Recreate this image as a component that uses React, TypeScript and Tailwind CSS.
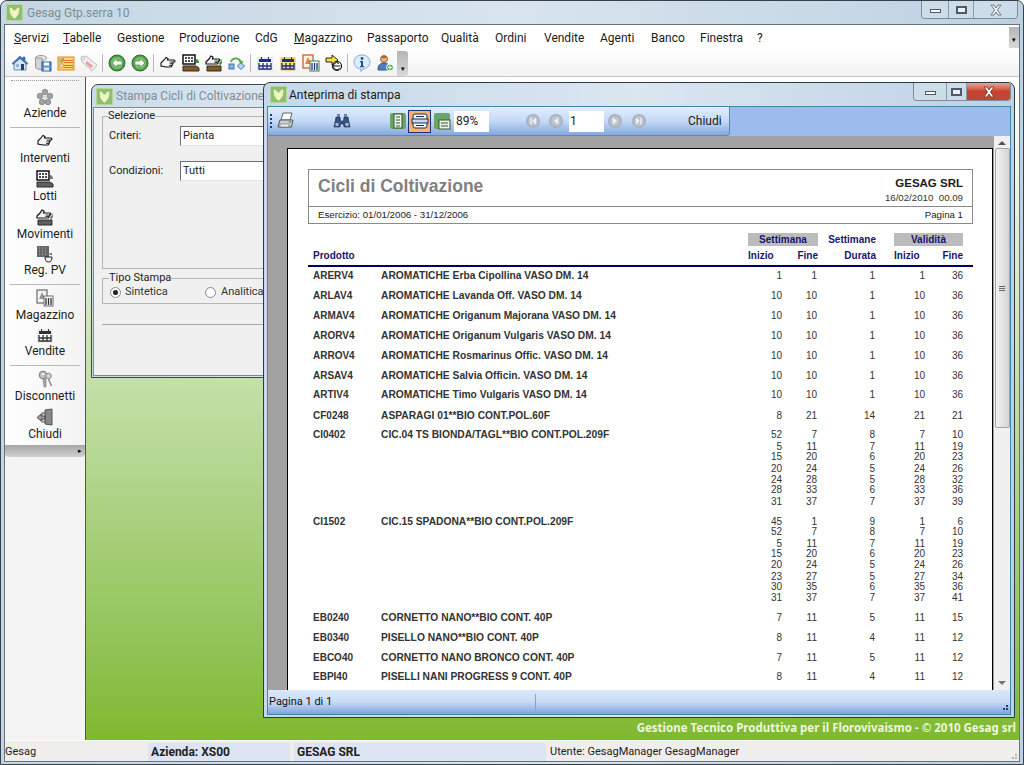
import type { ReactNode } from "react"

const ui = "font-['Roboto','Noto_Sans',sans-serif]"
const report = "font-['Liberation_Sans',Arial,sans-serif]"

function Svg({ children, size = 18, className = "" }: { children: ReactNode; size?: number; className?: string }) {
  return (
    <svg width={size} height={size} viewBox="0 0 18 18" className={"shrink-0 " + className}>
      {children}
    </svg>
  )
}

const AppLogo = () => (
  <Svg size={17}>
    <rect x="0.5" y="0.5" width="17" height="17" fill="#8fbf6e" stroke="#b9d5a0" />
    <path d="M9 15V7M9 15C6 13 4 10 4.500 4 7 5 8.500 7 9 9M9 15c3-2 5-5 4.500-11C11 5 9.500 7 9 9" fill="#f2f2b8" stroke="#f7f7d8" strokeWidth="0.8" />
  </Svg>
)

const Home = () => (
  <Svg>
    <path d="M3 9v7h12V9L9 4z" fill="#d9e6f2" stroke="#6b8bad" />
    <path d="M1 9.500 9 2l3 2.800V3h2v3.700l3 2.800-1 1L9 4.500 2 10.500z" fill="#3f79bd" stroke="#234f86" strokeWidth="0.5" />
    <rect x="10" y="10" width="3" height="6" fill="#1f3f73" />
    <rect x="5" y="10" width="3" height="3" fill="#8fb4dc" />
  </Svg>
)
const DbSave = () => (
  <Svg>
    <ellipse cx="7" cy="4" rx="5.500" ry="2.500" fill="#e6e6e6" stroke="#999" />
    <path d="M1.500 4v9c0 1.500 2.500 2.500 5.500 2.500h1V4z" fill="#d4d4d4" stroke="#999" />
    <rect x="8" y="8" width="9" height="9" fill="#5b93cf" stroke="#2f5f98" />
    <rect x="10" y="8.500" width="5" height="3" fill="#fff" />
    <rect x="10" y="13.500" width="5" height="3" fill="#dbe8f5" />
  </Svg>
)
const CheckList = () => (
  <Svg>
    <rect x="1" y="3" width="16" height="13" fill="#fbd66b" stroke="#d8892a" />
    <rect x="3" y="5" width="3" height="3" fill="#fff" stroke="#a06a20" strokeWidth="0.6" />
    <rect x="3" y="10" width="3" height="3" fill="#fff" stroke="#a06a20" strokeWidth="0.6" />
    <path d="M7 6.500h9M7 11.500h9M7 8.500h9M7 13.500h9" stroke="#d8772a" />
    <path d="M3.500 6.500l1 1 2-3" stroke="#2f7d2a" fill="none" />
  </Svg>
)
const Tag = () => (
  <Svg>
    <path d="M1 3l5-1 11 9-5 6L2 8z" fill="#f1eeee" stroke="#bcbcbc" />
    <path d="M7 7l6 5-2 2.500-5.500-5z" fill="#ee9d9d" />
    <circle cx="4" cy="5" r="1" fill="#fff" stroke="#aaa" strokeWidth="0.5" />
  </Svg>
)
const RoundArrow = ({ dir }: { dir: "l" | "r" }) => (
  <Svg>
    <circle cx="9" cy="9" r="8" fill="#4d9a48" stroke="#2c6d2c" />
    <circle cx="9" cy="9" r="6" fill="#7cc06d" />
    <path d={dir === "l" ? "M4 9l5-4.500V7h5v4H9v2.500z" : "M14 9L9 4.500V7H4v4h5v2.500z"} fill="#f3f7ee" stroke="#2c6d2c" strokeWidth="0.5" />
  </Svg>
)
const Hand = () => (
  <Svg>
    <path d="M2 9l3-3 2-2.500 2 1L8.500 6H15c1.300 0 1.300 2 0 2h-1.500c1 .3.800 1.800-.2 1.800.6.500.3 1.700-.6 1.700.3.600-.1 1.500-1 1.500H7l-5-1z" fill="#f7f7f7" stroke="#111" strokeWidth="1.100" />
    <path d="M10.500 8h3M10.500 9.800h2.800M10 11.500h2.500" stroke="#111" strokeWidth="0.8" />
  </Svg>
)
const KeyboardBox = () => (
  <Svg>
    <path d="M1 12h13l3 2v3H1z" fill="#7d5a32" stroke="#3f2a12" />
    <rect x="1" y="1" width="12" height="9" fill="#fff" stroke="#111" strokeWidth="1.500" />
    <path d="M3 4h2M6 4h2M9 4h2M3 7h2M6 7h2M9 7h2" stroke="#111" strokeWidth="1.300" />
    <path d="M14 5c2 0 3 2 3 4h-3z" fill="#3f8f3a" />
  </Svg>
)
const HandBox = () => (
  <Svg>
    <path d="M2 12h14v5H2z" fill="#7d5a32" stroke="#3f2a12" />
    <path d="M1 8l3-3 2-3 2 1-.5 2H14c1.200 0 1.200 1.800 0 1.800h-1c.8.300.6 1.500-.2 1.500.5.500.2 1.700-.8 1.700H5L1 10z" fill="#f3f3f3" stroke="#111" strokeWidth="1.200" />
    <path d="M9.500 7h3M9.500 8.500h2.500" stroke="#111" strokeWidth="0.8" />
    <path d="M14 9c2-1 2.500-3 2.500-5l.5 5-2 3z" fill="#3f8f3a" />
  </Svg>
)
const SyncArrow = () => (
  <Svg>
    <rect x="1" y="10" width="5" height="5" fill="#7fb0e6" stroke="#3d74b5" />
    <path d="M13 8.500l3.500 3.500-3.500 3.500L9.500 12z" fill="#b9d6f3" stroke="#3d74b5" />
    <path d="M3 8c1-4 7-5.500 10 0" fill="none" stroke="#5aa64e" strokeWidth="1.800" />
    <path d="M10.500 7.500l5-.5-2 3.500z" fill="#5aa64e" />
  </Svg>
)
const Calendar = ({ bg = "#fff" }: { bg?: string }) => (
  <Svg>
    <rect x="2" y="4" width="14" height="12" fill={bg} stroke={bg === "#fff" ? "#cfd8ea" : "#d9b93c"} />
    <rect x="3" y="5" width="12" height="3" fill="#1f2f7a" />
    <path d="M3 9v6h12V9M7 9v6M11 9v6M3 12h12" fill="none" stroke="#1f2f7a" strokeWidth="1.300" />
    <path d="M5.500 3v3M12.500 3v3" stroke="#1f2f7a" />
  </Svg>
)
const DocChart = () => (
  <Svg>
    <rect x="1" y="1" width="10" height="13" fill="#fff3e6" stroke="#d0602a" strokeWidth="1.300" />
    <path d="M6 3l3 7H3z" fill="#e6833a" />
    <rect x="8" y="7" width="9" height="10" fill="#fff" stroke="#3c7a52" />
    <path d="M10 9v7M12.500 9v7M15 9v7" stroke="#1f2f7a" strokeWidth="1.300" />
  </Svg>
)
const ArrowE = () => (
  <Svg>
    <path d="M1 4h6V1l6 5-6 5V8H1z" fill="#ffe23c" stroke="#111" strokeWidth="0.9" />
    <circle cx="12" cy="12" r="4.500" fill="#fff" stroke="#111" strokeWidth="1.200" />
    <path d="M9 12h6M14 9.500a3.500 3.500 0 1 0 .5 5" fill="none" stroke="#111" />
  </Svg>
)
const InfoBubble = () => (
  <Svg>
    <path d="M9 1c4.500 0 8 3 8 7s-3.500 7-7 7l-2 2.500V15C4 14.500 1 12 1 8s3.500-7 8-7z" fill="#dcecfb" stroke="#7fa9d6" />
    <circle cx="9" cy="4.500" r="1.400" fill="#1f4f9a" />
    <path d="M7 7h3v5h1.200v1.200H7V12h1V8.200H7z" fill="#1f4f9a" />
  </Svg>
)
const UserAdd = () => (
  <Svg>
    <circle cx="8" cy="5" r="3.500" fill="#e8b27c" stroke="#9a6a35" />
    <path d="M5 3.500c1-2.500 5-2.500 6 0-2 1-4 1-6 0z" fill="#a5642a" />
    <path d="M2 16c0-5 2-7 6-7s6 2 6 7z" fill="#4f7fbe" stroke="#2f5590" />
    <circle cx="14" cy="13.500" r="3.500" fill="#5bb04e" stroke="#fff" />
    <path d="M14 11.500v4M12 13.500h4" stroke="#fff" strokeWidth="1.200" />
  </Svg>
)
const Flower = () => (
  <Svg>
    <g fill="#a2a2a2" stroke="#6d6d6d" strokeWidth="0.6">
      <circle cx="9" cy="4" r="2.800" />
      <circle cx="4" cy="8" r="2.800" />
      <circle cx="14" cy="8" r="2.800" />
      <circle cx="6" cy="14" r="2.800" />
      <circle cx="12" cy="14" r="2.800" />
    </g>
    <circle cx="9" cy="9.500" r="2" fill="#d9d9d9" />
  </Svg>
)
const DottedCup = () => (
  <Svg>
    <rect x="1" y="1" width="12" height="11" fill="#666" />
    <path d="M3 3h.8M6 3h.8M9 3h.8M3 6h.8M6 6h.8M9 6h.8M3 9h.8M6 9h.8M9 9h.8" stroke="#ccc" />
    <path d="M9 12h7c0 3-1 5-3.500 5S9 15 9 12z" fill="#f2f2f2" stroke="#222" />
    <path d="M12 9l4-1v2z" fill="#555" />
  </Svg>
)
const Keys = () => (
  <Svg>
    <circle cx="7" cy="5" r="3.800" fill="#c2c2c2" stroke="#777" />
    <circle cx="7" cy="4" r="1" fill="#fff" />
    <path d="M7 9l1 8h2V9z" fill="#aaa" stroke="#777" strokeWidth="0.6" />
    <circle cx="12.500" cy="6" r="2.800" fill="#d2d2d2" stroke="#888" />
    <path d="M12.500 9l3 7" stroke="#888" strokeWidth="1.500" />
  </Svg>
)
const Door = () => (
  <Svg>
    <path d="M9 2l7-1v16l-7-1z" fill="#888" stroke="#555" />
    <rect x="6" y="5" width="3" height="9" fill="#ddd" stroke="#555" />
    <path d="M1 9.500L5 6v2h4v3H5v2z" fill="#9a9a9a" stroke="#333" strokeWidth="0.7" />
  </Svg>
)
const Printer = () => (
  <Svg>
    <path d="M6 1h9l-2 7H4z" fill="#fff" stroke="#666" />
    <path d="M3 8h13l-1.500 7H1z" fill="#c9d0d8" stroke="#555" />
    <rect x="3" y="12" width="9" height="3" fill="#eee" stroke="#666" strokeWidth="0.6" />
    <circle cx="13" cy="10" r="1" fill="#3aa33a" />
  </Svg>
)
const Binoculars = () => (
  <Svg>
    <path d="M3 5h4l.5 4h3L11 5h4l2 10h-6l-.5-3h-3L7 15H1z" fill="#36507f" stroke="#1b2c4e" strokeWidth="0.6" />
    <rect x="4" y="2" width="3" height="3" fill="#6c84ad" />
    <rect x="11" y="2" width="3" height="3" fill="#6c84ad" />
    <rect x="2.500" y="11" width="3" height="3" fill="#a9bbd8" />
    <rect x="12.500" y="11" width="3" height="3" fill="#a9bbd8" />
  </Svg>
)
const PageBtn = ({ kind }: { kind: 1 | 2 | 3 }) => (
  <Svg>
    {kind === 2 ? (
      <>
        <rect x="2" y="2" width="14" height="14" rx="2" fill="#f2f6fb" stroke="#1f2f55" />
        <rect x="1" y="7" width="16" height="4" fill="#c8d8ee" stroke="#1f2f55" />
        <path d="M5 4.500h8M5 13.500h8" stroke="#1f2f55" />
      </>
    ) : kind === 1 ? (
      <>
        <rect x="1" y="1" width="16" height="16" rx="2" fill="#67a664" />
        <rect x="5" y="2" width="8" height="14" fill="#eef3ea" stroke="#35562f" />
        <path d="M7 5h4M7 8h4M7 11h4M7 14h4" stroke="#35562f" />
      </>
    ) : (
      <>
        <rect x="1" y="1" width="16" height="16" rx="2" fill="#67a664" />
        <rect x="6" y="8" width="11" height="9" fill="#eef3ea" stroke="#35562f" />
        <path d="M8 11h7M8 14h7" stroke="#35562f" />
      </>
    )}
  </Svg>
)
const NavBtn = ({ glyph }: { glyph: "first" | "prev" | "next" | "last" }) => (
  <Svg size={16}>
    <circle cx="9" cy="9" r="8" fill="#a9b4c2" />
    <circle cx="9" cy="9" r="5.500" fill="#bcc5d0" />
    {glyph === "first" && <path d="M6 5h1.500v8H6zM12.500 5v8L8 9z" fill="#eef1f5" />}
    {glyph === "prev" && <path d="M11.500 5v8L6.500 9z" fill="#eef1f5" />}
    {glyph === "next" && <path d="M6.500 5v8l5-4z" fill="#eef1f5" />}
    {glyph === "last" && <path d="M10.500 5H12v8h-1.500zM5.500 5v8L10 9z" fill="#eef1f5" />}
  </Svg>
)

const menu = [
  { label: "Servizi", w: "w-[49px]", u: true },
  { label: "Tabelle", w: "w-[54px]", u: true },
  { label: "Gestione", w: "w-[62px]" },
  { label: "Produzione", w: "w-[76px]" },
  { label: "CdG", w: "w-[39px]" },
  { label: "Magazzino", w: "w-[73px]", u: true },
  { label: "Passaporto", w: "w-[74px]" },
  { label: "Qualità", w: "w-[54px]" },
  { label: "Ordini", w: "w-[49px]" },
  { label: "Vendite", w: "w-[56px]" },
  { label: "Agenti", w: "w-[51px]" },
  { label: "Banco", w: "w-[49px]" },
  { label: "Finestra", w: "w-[57px]" },
  { label: "?", w: "w-[12px]" },
]

const ToolSep = () => <div className="mx-[2px] h-[18px] w-px bg-[#b9b9b9]" />
const Slot = ({ children }: { children: ReactNode }) => <div className="flex w-[23px] justify-center">{children}</div>

function WinButtons({ active }: { active?: boolean }) {
  return (
    <div className="flex h-[18px] overflow-hidden rounded-b-[4px] border border-t-0 border-[#7f8c98]">
      <div className={"flex items-center justify-center bg-[#d2dfeb]/70 " + (active ? "w-[32px]" : "w-[26px]")}>
        <div className="mt-[3px] h-[4px] w-[11px] border border-[#4e5a66] bg-white" />
      </div>
      <div className={"flex items-center justify-center border-x border-[#8d9aa6] bg-[#d2dfeb]/70 " + (active ? "w-[21px]" : "w-[26px]")}>
        <div className="h-[8px] w-[11px] border-2 border-[#4e5a66] bg-white/60" />
      </div>
      <div className={"flex w-[43px] items-center justify-center " + (active ? "bg-gradient-to-b from-[#e3a496] via-[#c9412c] to-[#b84a35]" : "bg-[#d2dfeb]/70")}>
        <svg width="14" height="12" viewBox="0 0 14 12">
          <path d="M2 1h3l2 3 2-3h3L8.500 6 12 11H9L7 8l-2 3H2l3.500-5z" fill={active ? "#fff" : "#e8eef4"} stroke={active ? "#6d2a1c" : "#5a6672"} strokeWidth="0.8" />
        </svg>
      </div>
    </div>
  )
}

function Side({ icon, label, gray = false, h = "h-[38px]" }: { icon: ReactNode; label: string; gray?: boolean; h?: string }) {
  return (
    <div className={"flex flex-col items-center justify-start " + h}>
      <div className={"flex h-[20px] items-center " + (gray ? "grayscale" : "")}>{icon}</div>
      <div className="mt-[-2px] text-[12px] leading-[18px] text-[#1c1c1c]">{label}</div>
    </div>
  )
}
const SideSep = () => <div className="mx-[4px] mb-[3px] mt-[5px] h-px bg-[#b8b8b8]" />

const lines: { code?: string; desc?: string; n: number[]; h: string }[] = [
  { code: "ARERV4", desc: "AROMATICHE Erba Cipollina VASO DM. 14", n: [1, 1, 1, 1, 36], h: "h-[20px]" },
  { code: "ARLAV4", desc: "AROMATICHE Lavanda Off. VASO DM. 14", n: [10, 10, 1, 10, 36], h: "h-[20px]" },
  { code: "ARMAV4", desc: "AROMATICHE Origanum Majorana VASO DM. 14", n: [10, 10, 1, 10, 36], h: "h-[20px]" },
  { code: "ARORV4", desc: "AROMATICHE Origanum Vulgaris VASO DM. 14", n: [10, 10, 1, 10, 36], h: "h-[20px]" },
  { code: "ARROV4", desc: "AROMATICHE Rosmarinus Offic. VASO DM. 14", n: [10, 10, 1, 10, 36], h: "h-[20px]" },
  { code: "ARSAV4", desc: "AROMATICHE Salvia Officin. VASO DM. 14", n: [10, 10, 1, 10, 36], h: "h-[19px]" },
  { code: "ARTIV4", desc: "AROMATICHE Timo Vulgaris VASO DM. 14", n: [10, 10, 1, 10, 36], h: "h-[21px]" },
  { code: "CF0248", desc: "ASPARAGI 01**BIO CONT.POL.60F", n: [8, 21, 14, 21, 21], h: "h-[19px]" },
  { code: "CI0402", desc: "CIC.04 TS BIONDA/TAGL**BIO CONT.POL.209F", n: [52, 7, 8, 7, 10], h: "h-[12px]" },
  { n: [5, 11, 7, 11, 19], h: "h-[10px]" },
  { n: [15, 20, 6, 20, 23], h: "h-[12px]" },
  { n: [20, 24, 5, 24, 26], h: "h-[11px]" },
  { n: [24, 28, 5, 28, 32], h: "h-[10px]" },
  { n: [28, 33, 6, 33, 36], h: "h-[12px]" },
  { n: [31, 37, 7, 37, 39], h: "h-[20px]" },
  { code: "CI1502", desc: "CIC.15 SPADONA**BIO CONT.POL.209F", n: [45, 1, 9, 1, 6], h: "h-[10px]" },
  { n: [52, 7, 8, 7, 10], h: "h-[12px]" },
  { n: [5, 11, 7, 11, 19], h: "h-[10px]" },
  { n: [15, 20, 6, 20, 23], h: "h-[11px]" },
  { n: [20, 24, 5, 24, 26], h: "h-[12px]" },
  { n: [23, 27, 5, 27, 34], h: "h-[10px]" },
  { n: [30, 35, 6, 35, 36], h: "h-[11px]" },
  { n: [31, 37, 7, 37, 41], h: "h-[20px]" },
  { code: "EB0240", desc: "CORNETTO NANO**BIO CONT. 40P", n: [7, 11, 5, 11, 15], h: "h-[20px]" },
  { code: "EB0340", desc: "PISELLO NANO**BIO CONT. 40P", n: [8, 11, 4, 11, 12], h: "h-[20px]" },
  { code: "EBCO40", desc: "CORNETTO NANO BRONCO CONT. 40P", n: [7, 11, 5, 11, 12], h: "h-[19px]" },
  { code: "EBPI40", desc: "PISELLI NANI PROGRESS 9 CONT. 40P", n: [8, 11, 4, 11, 12], h: "h-[16px]" },
]

function ReportPage() {
  return (
    <div className={"h-full border-x border-t border-black bg-white pl-[20px] pt-[20px] " + report}>
      <div className="w-[665px] border border-[#8a8a8a]">
        <div className="flex h-[37px] justify-between border-b border-[#8a8a8a] pl-[9px] pr-[9px]">
          <div className="pt-[6px] text-[17.500px] font-bold leading-[20px] text-[#808080]">Cicli di Coltivazione</div>
          <div className="text-right">
            <div className="pt-[6px] text-[11.500px] font-bold leading-[14px] text-[#1a1a1a]">GESAG SRL</div>
            <div className="mt-[2px] whitespace-pre text-[9.700px] leading-[12px] text-[#333]">16/02/2010  00.09</div>
          </div>
        </div>
        <div className="flex h-[16px] items-center justify-between px-[9px] text-[9.700px] text-[#222]">
          <span>Esercizio: 01/01/2006 - 31/12/2006</span>
          <span>Pagina 1</span>
        </div>
      </div>

      <div className="mt-[9px] grid h-[11px] grid-cols-[440px_70px_10px_48px_18px_69px] text-[10px] font-bold leading-[13px] text-[#1a1570]">
        <div />
        <div className="bg-[#bcbcbc] text-center">Settimana</div>
        <div />
        <div className="text-right">Settimane</div>
        <div />
        <div className="bg-[#bcbcbc] text-center">Validità</div>
      </div>
      <div className="mt-[6px] grid h-[12px] grid-cols-[440px_70px_10px_48px_18px_69px] text-[10px] font-bold leading-[12px] text-[#1a1570]">
        <div className="pl-[5px]">Prodotto</div>
        <div className="flex justify-between">
          <span>Inizio</span>
          <span>Fine</span>
        </div>
        <div />
        <div className="text-right">Durata</div>
        <div />
        <div className="flex justify-between">
          <span>Inizio</span>
          <span>Fine</span>
        </div>
      </div>
      <div className="mt-[3px] h-[2px] w-[665px] bg-[#00005a]" />

      <div className="mt-[3px] pl-[5px]">
        {lines.map((l, i) => (
          <div key={i} className={"grid grid-cols-[68px_366px_35px_35px_58px_50px_38px] " + l.h}>
            <div className="text-[10px] font-bold leading-[12px] text-[#333]">{l.code}</div>
            <div className="whitespace-nowrap text-[10.250px] font-bold leading-[12px] text-[#333]">{l.desc}</div>
            {l.n.map((v, j) => (
              <div key={j} className="text-right text-[10px] leading-[12px] text-[#333]">
                {v}
              </div>
            ))}
          </div>
        ))}
      </div>
    </div>
  )
}

function PreviewWindow() {
  return (
    <div className="absolute left-[177px] top-[5px] flex h-[636px] w-[752px] flex-col overflow-hidden rounded-t-[7px] border border-[#2c3a44] bg-gradient-to-r from-[#c6d8ea] via-[#dbe6f0] to-[#bcd1e6]">
      <div className="flex h-[23px] shrink-0 items-center pl-[6px] pr-[3px]">
        <AppLogo />
        <span className="ml-[2px] text-[12px] text-[#1a1a1a]">Anteprima di stampa</span>
        <div className="ml-auto self-start">
          <WinButtons active />
        </div>
      </div>

      <div className="mx-[3px] flex min-h-0 flex-1 flex-col border border-[#3f88a8]">
        <div className="flex h-[29px] shrink-0 bg-[#9ebbee]">
          <div className="flex w-[462px] items-center rounded-br-[4px] border-b border-r border-[#5f86c4] bg-gradient-to-b from-[#e2edfc] via-[#c5d9f7] to-[#84a8dd] pl-[2px]">
            <div className="mr-[5px] h-[14px] w-[2px] border-l-2 border-dotted border-[#1f3f78]" />
            <Printer />
            <div className="ml-[38px]">
              <Binoculars />
            </div>
            <div className="ml-[38px] w-[18px]">
              <PageBtn kind={1} />
            </div>
            <div className="ml-[1px] flex h-[23px] w-[23px] items-center justify-center border border-[#1f2f75] bg-[#f6b36b]">
              <PageBtn kind={2} />
            </div>
            <div className="ml-[2px]">
              <PageBtn kind={3} />
            </div>
            <div className="ml-[3px] h-[21px] w-[35px] bg-white pl-[2px] text-[12px] leading-[21px] text-[#222]">89%</div>
            <div className="ml-[36px]">
              <NavBtn glyph="first" />
            </div>
            <div className="ml-[7px]">
              <NavBtn glyph="prev" />
            </div>
            <div className="ml-[5px] h-[21px] w-[35px] bg-white pl-[1px] text-[12px] leading-[21px] text-[#222]">1</div>
            <div className="ml-[3px]">
              <NavBtn glyph="next" />
            </div>
            <div className="ml-[8px]">
              <NavBtn glyph="last" />
            </div>
            <span className="ml-[41px] text-[12px] text-[#1a1a1a]">Chiudi</span>
          </div>
        </div>

        <div className="flex min-h-0 flex-1 bg-[#f0f0f0]">
          <div className="min-h-0 min-w-0 flex-1 overflow-hidden bg-[#a3a3a3] pl-[19px] pr-[1px] pt-[12px]">
            <ReportPage />
          </div>
          <div className="flex w-[16px] shrink-0 flex-col items-center bg-[#f0f0f0]">
            <div className="mt-[5px] h-0 w-0 border-x-[4px] border-b-[4px] border-x-transparent border-b-[#555]" />
            <div className="mt-[3px] flex h-[280px] w-[15px] flex-col items-center justify-center gap-[1px] rounded-[2px] border border-[#a5a5a5] bg-gradient-to-r from-[#f2f2f2] to-[#d4d4d4]">
              <div className="h-px w-[6px] bg-[#666]" />
              <div className="h-px w-[6px] bg-[#666]" />
              <div className="h-px w-[6px] bg-[#666]" />
            </div>
            <div className="mb-[5px] mt-auto h-0 w-0 border-x-[4px] border-t-[4px] border-x-transparent border-t-[#777]" />
          </div>
        </div>

        <div className="flex h-[24px] shrink-0 items-center bg-gradient-to-b from-[#dbe8fb] via-[#c8dbf7] to-[#7fa3da] pl-[1px] text-[11px] text-[#111]">
          <span className="w-[267px] border-r border-[#8aa3c8]">Pagina 1 di 1</span>
          <div className="ml-auto mr-[2px] mt-[10px] grid grid-cols-3 gap-px">
            <i />
            <i />
            <i className="h-[2px] w-[2px] bg-[#1f3f78]" />
            <i />
            <i className="h-[2px] w-[2px] bg-[#1f3f78]" />
            <i className="h-[2px] w-[2px] bg-[#1f3f78]" />
          </div>
        </div>
      </div>
      <div className="h-[2px] shrink-0" />
    </div>
  )
}

function PrintDialog() {
  return (
    <div className="absolute left-[5px] top-[7px] flex h-[294px] w-[190px] flex-col overflow-hidden rounded-t-[7px] border border-[#3a4750] bg-gradient-to-r from-[#cadbe9] to-[#dde7f0]">
      <div className="flex h-[22px] shrink-0 items-center pl-[4px]">
        <AppLogo />
        <span className="ml-[3px] whitespace-nowrap text-[12px] text-[#7f8d96]">Stampa Cicli di Coltivazione</span>
      </div>
      <div className="mx-[1px] mb-[1px] flex-1 border border-[#7f8a92] bg-[#f0f0f0] pl-[8px] pt-[2px] text-[11px] text-[#222]">
        <fieldset className="h-[159px] w-[200px] border border-[#b5b5b5] pl-[6px]">
          <legend className="ml-[-1px] px-0 text-[11px] leading-[12px]">Selezione</legend>
          <div className="mt-[4px] flex h-[20px] items-center">
            <span className="w-[71px]">Criteri:</span>
            <div className="h-[20px] flex-1 border border-[#6d6d6d] border-b-[#e3e3e3] bg-white pl-[2px] leading-[18px]">Pianta</div>
          </div>
          <div className="mt-[15px] flex h-[20px] items-center">
            <span className="w-[71px]">Condizioni:</span>
            <div className="h-[20px] flex-1 border border-[#6d6d6d] border-b-[#e3e3e3] bg-white pl-[2px] leading-[18px]">Tutti</div>
          </div>
        </fieldset>
        <fieldset className="mt-[3px] h-[32px] w-[200px] border border-[#b5b5b5] pl-[7px]">
          <legend className="ml-[-1px] px-0 text-[11px] leading-[12px]">Tipo Stampa</legend>
          <div className="flex h-[17px] items-center">
            <span className="flex h-[11px] w-[11px] items-center justify-center rounded-full border border-[#8a8a8a] bg-white">
              <span className="h-[5px] w-[5px] rounded-full bg-[#222]" />
            </span>
            <span className="ml-[4px] w-[80px] text-[#333]">Sintetica</span>
            <span className="h-[11px] w-[11px] rounded-full border border-[#8a8a8a] bg-white" />
            <span className="ml-[5px] text-[#333]">Analitica</span>
          </div>
        </fieldset>
        <div className="mt-[20px] h-px w-[200px] bg-[#a8a8a8]" />
      </div>
    </div>
  )
}

export default function App() {
  return (
    <div className={"flex h-[765px] w-[1024px] flex-col overflow-hidden rounded-t-[7px] border border-[#36424a] bg-gradient-to-r from-[#c4d6e4] via-[#d9e4ee] to-[#bdd1e3] " + ui}>
      <div className="flex h-[23px] shrink-0 items-center pl-[5px] pr-[5px]">
        <AppLogo />
        <span className="ml-[4px] text-[12px] text-[#808c92]">Gesag Gtp.serra 10</span>
        <div className="ml-auto self-start">
          <WinButtons />
        </div>
      </div>

      <div className="mx-[3px] mb-[2px] flex min-h-0 flex-1 flex-col border border-[#66737d] bg-[#f0eeec]">
        <div className="flex h-[25px] shrink-0 items-center bg-white pl-[9px] text-[12px] text-[#1a1a1a]">
          {menu.map((m) => (
            <span key={m.label} className={m.w}>
              {m.u ? (
                <>
                  <span className="underline">{m.label[0]}</span>
                  {m.label.slice(1)}
                </>
              ) : (
                m.label
              )}
            </span>
          ))}
          <div className="ml-auto flex h-[21px] w-[10px] items-end justify-center bg-gradient-to-b from-[#b5b5b5] to-[#d8d8d8] pb-[4px] text-[7px] leading-none text-black">▾</div>
        </div>

        <div className="flex h-[27px] shrink-0 items-center border-b border-[#c8c8c8] bg-gradient-to-b from-white to-[#f2f2f2] pl-[3px]">
          <Slot><Home /></Slot>
          <Slot><DbSave /></Slot>
          <Slot><CheckList /></Slot>
          <Slot><Tag /></Slot>
          <ToolSep />
          <Slot><RoundArrow dir="l" /></Slot>
          <Slot><RoundArrow dir="r" /></Slot>
          <ToolSep />
          <Slot><Hand /></Slot>
          <Slot><KeyboardBox /></Slot>
          <Slot><HandBox /></Slot>
          <Slot><SyncArrow /></Slot>
          <ToolSep />
          <Slot><Calendar /></Slot>
          <Slot><Calendar bg="#fbe27a" /></Slot>
          <Slot><DocChart /></Slot>
          <Slot><ArrowE /></Slot>
          <ToolSep />
          <Slot><InfoBubble /></Slot>
          <Slot><UserAdd /></Slot>
          <div className="ml-[1px] flex h-[25px] w-[11px] items-end justify-center rounded-r-[3px] bg-gradient-to-b from-[#b5b5b5] to-[#d8d8d8] pb-[3px] text-[7px] leading-none text-black">▾</div>
        </div>

        <div className="flex min-h-0 flex-1">
          <div className="flex w-[80px] shrink-0 flex-col bg-[#f4f4f4]">
            <div className="rounded-t-[3px] bg-gradient-to-r from-white to-[#f2f2f2] px-[1px] pt-[3px]">
              <div className="mx-[5px] mb-[7px] border-t border-dotted border-[#999]" />
              <Side icon={<Flower />} label="Aziende" h="h-[34px]" />
              <SideSep />
              <Side icon={<Hand />} label="Interventi" gray />
              <Side icon={<KeyboardBox />} label="Lotti" gray />
              <Side icon={<HandBox />} label="Movimenti" gray />
              <Side icon={<DottedCup />} label="Reg. PV" gray h="h-[34px]" />
              <SideSep />
              <Side icon={<DocChart />} label="Magazzino" gray />
              <Side icon={<Calendar />} label="Vendite" gray h="h-[34px]" />
              <SideSep />
              <Side icon={<Keys />} label="Disconnetti" />
              <Side icon={<Door />} label="Chiudi" />
            </div>
            <div className="flex h-[12px] items-center justify-end rounded-b-[4px] bg-gradient-to-b from-[#a6a6a6] to-[#d0d0d0] pr-[3px] text-[7px] leading-none text-black">▸</div>
          </div>

          <div className="relative flex min-w-0 flex-1 flex-col justify-end border-l border-[#555] bg-gradient-to-b from-white to-[#7fb92e]">
            <PrintDialog />
            <PreviewWindow />
            <div className="h-[22px] whitespace-nowrap pr-[3px] text-right font-['Noto_Sans',sans-serif] text-[11.500px] font-bold leading-[19px] text-[#eef6dc]">
              Gestione Tecnico Produttiva per il Florovivaismo - © 2010 Gesag srl
            </div>
          </div>
        </div>

        <div className="flex h-[21px] shrink-0 items-end border-t border-white text-[11px] text-[#222]">
          <span className="h-[18px] w-[143px] leading-[18px]">Gesag</span>
          <span className="mr-[4px] h-[18px] w-[142px] bg-[#dde4f3] pl-[3px] text-[12px] font-bold leading-[18px]">Azienda: XS00</span>
          <span className="mr-[4px] h-[18px] w-[252px] bg-[#dde4f3] pl-[3px] text-[12px] font-bold leading-[18px]">GESAG SRL</span>
          <span className="h-[18px] leading-[18px]">Utente: GesagManager GesagManager</span>
          <div className="ml-auto mb-[2px] mr-[2px] grid grid-cols-3 gap-px">
            <i />
            <i />
            <i className="h-[2px] w-[2px] bg-[#b5b5b5]" />
            <i />
            <i className="h-[2px] w-[2px] bg-[#b5b5b5]" />
            <i className="h-[2px] w-[2px] bg-[#b5b5b5]" />
          </div>
        </div>
      </div>
    </div>
  )
}
